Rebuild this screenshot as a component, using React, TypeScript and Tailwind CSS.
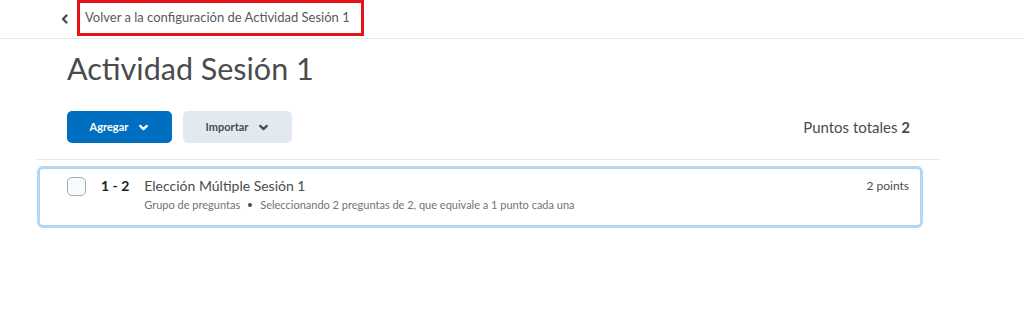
import React from "react";

function Chevron({ className }: { className?: string }) {
  return (
    <svg viewBox="0 0 10 10" className={className} fill="none" stroke="currentColor" strokeWidth="2" strokeLinecap="round" strokeLinejoin="round">
      <path d="M2 3.5 L5 6.5 L8 3.5" />
    </svg>
  );
}

export default function App() {
  return (
    <div className="w-[1024px] h-[310px] bg-white text-[#494c4e]" style={{ fontFamily: "Lato, 'Noto Sans', sans-serif" }}>
      <div className="h-[39px] border-b border-[#e6eaf0] flex items-center pl-[60px]">
        <svg viewBox="0 0 10 10" className="w-[10px] h-[12px] text-[#494c4e]" fill="none" stroke="currentColor" strokeWidth="2.4" strokeLinecap="round" strokeLinejoin="round">
          <path d="M6.5 1.5 L3 5 L6.5 8.5" />
        </svg>
        <div className="ml-[7px] mt-[-2px] h-[36px] w-[287px] border-[3px] border-[#e3121b] flex items-center pl-[5px]">
          <span className="text-[13px] text-[#565a5c]">Volver a la configuración de Actividad Sesión 1</span>
        </div>
      </div>

      <div className="pl-[67px] pr-[114px]">
        <h1 className="mt-[9px] text-[30.5px] leading-[40px] text-[#494c4e]">Actividad Sesión 1</h1>

        <div className="mt-[23px] flex items-center justify-between">
          <div className="flex gap-[11px]">
            <button className="w-[105px] h-[32px] rounded-[5px] bg-[#006fbf] text-white text-[11px] font-bold flex items-center justify-center gap-[10px]">
              Agregar
              <Chevron className="w-[11px] h-[11px]" />
            </button>
            <button className="w-[109px] h-[32px] rounded-[5px] bg-[#e3e9f1] text-[#494c4e] text-[11px] font-bold flex items-center justify-center gap-[10px]">
              Importar
              <Chevron className="w-[11px] h-[11px]" />
            </button>
          </div>
          <div className="text-[15px] text-[#494c4e]">
            Puntos totales <span className="font-bold">2</span>
          </div>
        </div>
      </div>

      <div className="ml-[36px] w-[904px] mt-[16px] border-t border-[#e6eaf0]" />

      <div className="ml-[37px] w-[886px] mt-[6px] h-[62px] rounded-[6px] border-[3px] border-[#b5d6ee] flex pl-[27px] pr-[11px] pt-[7px]">
        <div className="w-[19px] h-[19px] mt-[1px] rounded-[5px] border border-[#a6abaf] bg-[#f6fbff]" />
        <div className="ml-[15px] text-[14px] font-bold text-[#202122] leading-[20px]">1 - 2</div>
        <div className="ml-[15px] flex-1">
          <div className="text-[14px] leading-[20px] text-[#494c4e]">Elección Múltiple Sesión 1</div>
          <div className="text-[11px] leading-[18px] text-[#6e7477] flex items-center">
            Grupo de preguntas
            <span className="mx-[8px] w-[4px] h-[4px] rounded-full bg-[#494c4e]" />
            Seleccionando 2 preguntas de 2, que equivale a 1 punto cada una
          </div>
        </div>
        <div className="text-[12px] leading-[20px] text-[#494c4e]">2 points</div>
      </div>
    </div>
  );
}
